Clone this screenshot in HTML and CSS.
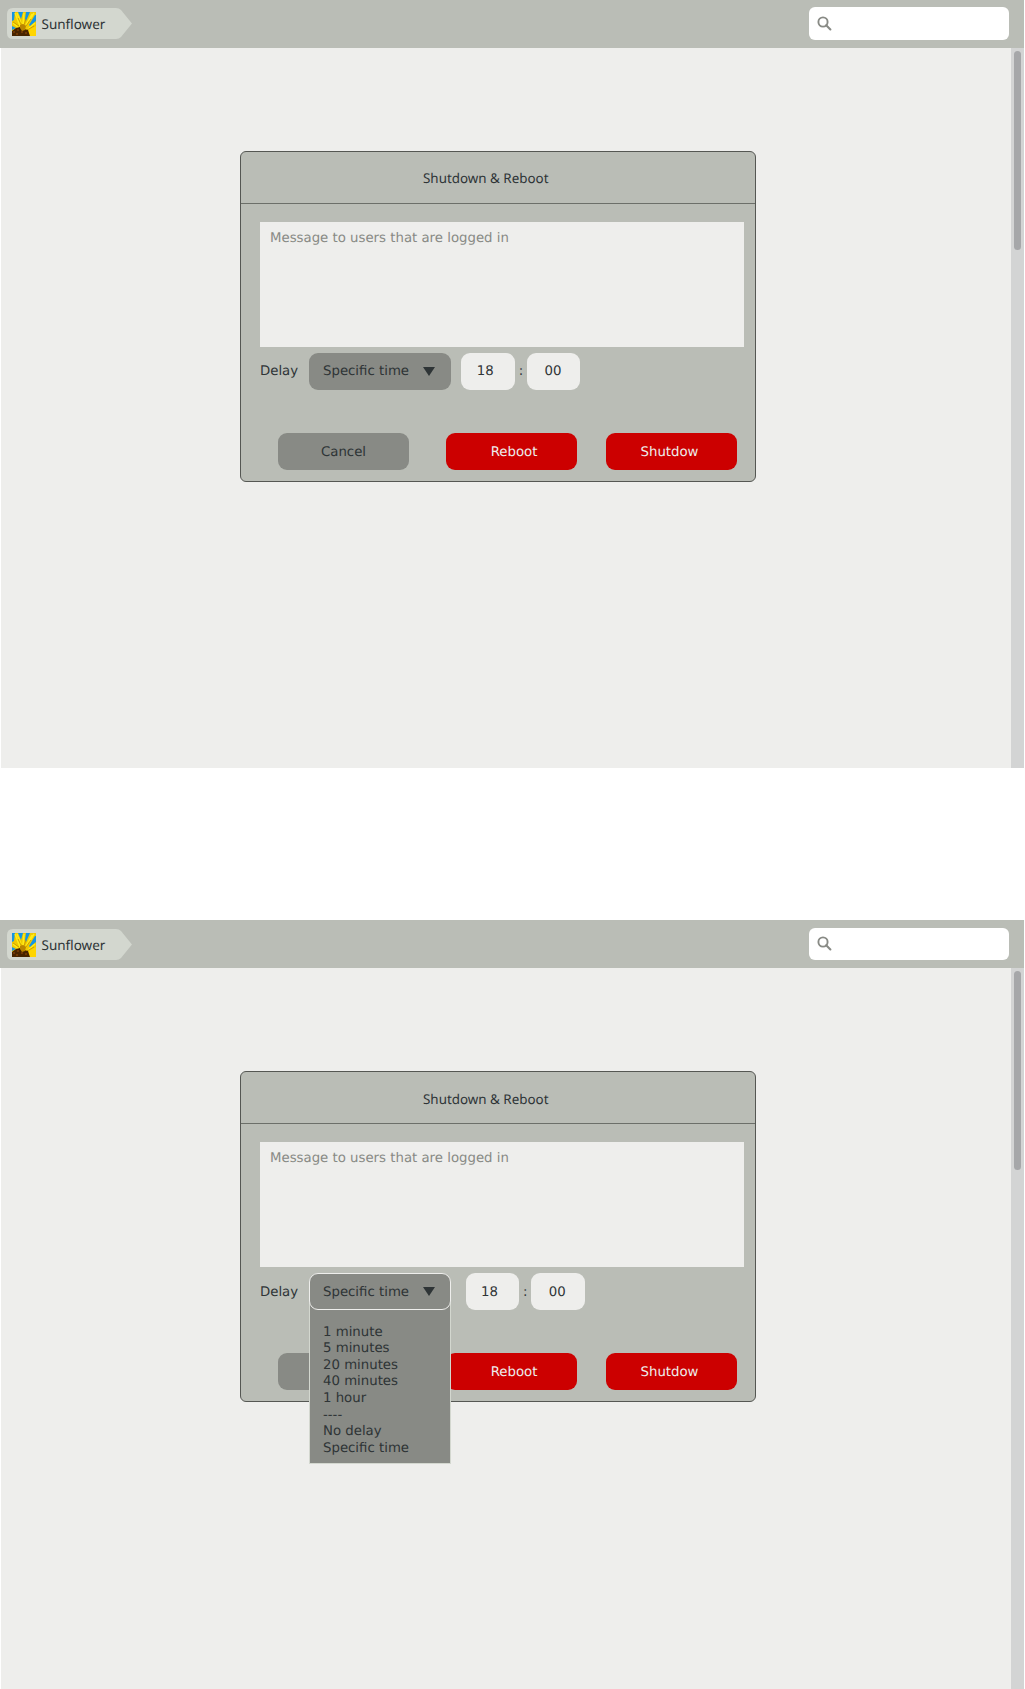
FILE: index.html
```
<!DOCTYPE html>
<html lang="en">
<head>
<meta charset="utf-8">
<title>Shutdown &amp; Reboot</title>
<link rel="stylesheet" href="styles.css">
</head>
<body>
<svg width="0" height="0" class="defs" aria-hidden="true">
  <symbol id="sunflower" viewBox="0 0 24 24">
    <rect width="24" height="24" fill="#f0c800"/>
    <path d="M0 0H3L2 8L0 9ZM6 0H11L9 7ZM14 0H18L14 9L13 7ZM23 3H24V9L18 14L17 13ZM0 14L4 16L0 18Z" fill="#1495e4"/>
    <path d="M3 1L8 14M5 1L9 11M12 1L11 12M20 2L14 13M22 1L17 9M23 11L16 17M1 11L7 16" stroke="#ffec18" stroke-width="1.5" fill="none"/>
    <path d="M1 10L7 14M6 6L10 14M14 7L12 13M19 7L14 14M22 14L15 18" stroke="#c59200" stroke-width=".8" fill="none"/>
    <path d="M17 18L24 14V24H16Z" fill="#ffd500"/>
    <path d="M0 19L4 16L8 15L12 17L16 18L18 24H0Z" fill="#482400"/>
    <path d="M8 13L11 12L14 14L13 18L10 19L8 16Z" fill="#ba8500"/>
    <path d="M1 20H3M5 18H7M4 22H6M9 20H11M13 21H15" stroke="#994b08"/>
  </symbol>
  <symbol id="search" viewBox="0 0 16 16">
    <circle cx="6" cy="6" r="4.6" fill="none" stroke="#888a85" stroke-width="1.9"/>
    <path d="M9.2 9.2L13.4 13.4" stroke="#888a85" stroke-width="2.1" stroke-linecap="round"/>
  </symbol>
  <symbol id="arrow" viewBox="0 0 12 9"><path d="M0 0H12L6 9Z" fill="#2e3436"/></symbol>
</svg>

<section class="screen">
  <header class="topbar">
    <div class="crumb"><svg class="crumb-shape" viewBox="0 0 125 31"><path d="M6 0H109Q112 0 114 2L125 15.5L114 29Q112 31 109 31H6Q0 31 0 25V6Q0 0 6 0Z"/></svg><svg class="crumb-icon"><use href="#sunflower"/></svg><span class="crumb-name">Sunflower</span></div>
    <div class="search"><svg class="search-icon"><use href="#search"/></svg></div>
  </header>
  <main class="content">
    <div class="stage">
      <div class="dialog">
        <h1 class="dialog-title"><span>Shutdown &amp; Reboot</span></h1>
        <div class="dialog-body">
          <div class="message">Message to users that are logged in</div>
          <div class="delay">
            <span class="label">Delay</span>
            <div class="select">Specific time<svg class="arrow"><use href="#arrow"/></svg></div>
            <div class="field hours">18</div><span class="colon">:</span><div class="field minutes">00</div>
          </div>
          <div class="actions">
            <div class="button cancel">Cancel</div>
            <div class="button danger reboot">Reboot</div>
            <div class="button danger shutdown">Shutdow</div>
          </div>
        </div>
      </div>
    </div>
    <div class="scrollbar"><div class="thumb"></div></div>
  </main>
</section>

<section class="screen open">
  <header class="topbar">
    <div class="crumb"><svg class="crumb-shape" viewBox="0 0 125 31"><path d="M6 0H109Q112 0 114 2L125 15.5L114 29Q112 31 109 31H6Q0 31 0 25V6Q0 0 6 0Z"/></svg><svg class="crumb-icon"><use href="#sunflower"/></svg><span class="crumb-name">Sunflower</span></div>
    <div class="search"><svg class="search-icon"><use href="#search"/></svg></div>
  </header>
  <main class="content">
    <div class="stage">
      <div class="dialog">
        <h1 class="dialog-title"><span>Shutdown &amp; Reboot</span></h1>
        <div class="dialog-body">
          <div class="message">Message to users that are logged in</div>
          <div class="delay">
            <span class="label">Delay</span>
            <div class="picker">
              <ul class="menu">
                <li>1 minute</li>
                <li>5 minutes</li>
                <li>20 minutes</li>
                <li>40 minutes</li>
                <li>1 hour</li>
                <li>----</li>
                <li>No delay</li>
                <li>Specific time</li>
              </ul>
              <div class="select active">Specific time<svg class="arrow"><use href="#arrow"/></svg></div>
            </div>
            <div class="field hours">18</div><span class="colon">:</span><div class="field minutes">00</div>
          </div>
          <div class="actions">
            <div class="button cancel"></div>
            <div class="button danger reboot">Reboot</div>
            <div class="button danger shutdown">Shutdow</div>
          </div>
        </div>
      </div>
    </div>
    <div class="scrollbar"><div class="thumb"></div></div>
  </main>
</section>
</body>
</html>
```
FILE: styles.css
```
* { box-sizing: border-box; }
body {
  margin: 0;
  height: 1689px;
  overflow: hidden;
  background: #fff;
  color: #2e3436;
  font: 13.3px/16.6px "DejaVu Sans", sans-serif;
  text-rendering: geometricPrecision;
  white-space: nowrap;
}
.defs { position: absolute; }
.screen { width: 1024px; height: 768.4px; margin-bottom: 152px; }
.screen.open { height: 769px; margin-bottom: 0; }

.topbar {
  display: flex;
  justify-content: space-between;
  height: 48px;
  padding: 7.3px 15px 0 7px;
  background: #babdb6;
}
.crumb {
  position: relative;
  display: flex;
  width: 125px;
  height: 31px;
  margin-top: 1.2px;
}
.crumb-shape {
  position: absolute;
  inset: 0;
  width: 125px;
  height: 31px;
  fill: #d3d7cf;
}
.crumb-icon { position: relative; width: 24px; height: 24px; margin: 4px 0 0 4.5px; }
.crumb-name {
  position: relative;
  margin-left: 6px;
  font: 13.5px/32.5px "Noto Sans", sans-serif;
}
.search {
  width: 200px;
  height: 32.4px;
  padding: 8.5px 7.5px;
  border-radius: 6px;
  background: #fff;
}
.search-icon { display: block; width: 16px; height: 16px; }

.content {
  display: flex;
  height: calc(100% - 48px);
  margin-left: 1px;
  background: #eeeeec;
}
.stage { flex: 1; padding: 103px 0 0 238.5px; }
.scrollbar { width: 13px; padding: 3px 3px 0; background: #d3d4d4; }
.thumb { height: 199px; border-radius: 3.5px; background: #a6a7a9; }

.dialog {
  width: 516.9px;
  height: 331px;
  border: 1px solid #555753;
  border-radius: 6px;
  background: #babdb6;
}
.dialog-title {
  height: 52px;
  margin: 0;
  padding-left: 182.5px;
  border-bottom: 1.5px solid #6c6f69;
  font: 13.4px/53.5px "Noto Sans", sans-serif;
}
.open .dialog-title { line-height: 54px; }
.dialog-body { padding: 17.5px 11.4px 0 19.5px; }
.message {
  height: 125px;
  padding: 9.2px 10px;
  background: #eeeeec;
  color: #888a85;
}
.delay { display: flex; height: 37.5px; margin-top: 6px; line-height: 38.5px; }
.open .delay { line-height: 39.5px; }
.label { width: 49px; }
.select {
  display: flex;
  align-items: center;
  justify-content: space-between;
  width: 141.5px;
  height: 37.5px;
  padding: 2px 16px 0 14px;
  border-radius: 9px;
  background: #888a85;
}
.arrow { width: 12px; height: 9px; margin-top: -2px; }
.field {
  width: 53.5px;
  border-radius: 9px;
  background: #eeeeec;
}
.hours { margin-left: 10.7px; padding-left: 15.5px; }
.minutes { padding-left: 17.5px; }
.colon { width: 12.3px; padding-left: 4px; }
.actions { display: flex; margin: 42.5px 0 0 18px; line-height: 39px; }
.button {
  width: 131px;
  height: 37.5px;
  border-radius: 9px;
  background: #888a85;
  text-align: center;
}
.danger { background: #c00; color: #eeeeec; }
.reboot { margin-left: 37px; padding-left: 5px; }
.shutdown { margin-left: 29px; padding-right: 4px; }

.picker { position: relative; }
.select.active { position: relative; border: 1px solid #eeeeec; padding: 2px 15px 0 13px; }
.menu {
  position: absolute;
  top: 19px;
  left: 0;
  width: 141.5px;
  height: 172px;
  margin: 0;
  padding: 31.8px 0 0 13px;
  border: 1px solid #d3d7cf;
  list-style: none;
  background: #888a85;
  line-height: 16.6px;
}
.open .hours { margin-left: 15px; }
```
